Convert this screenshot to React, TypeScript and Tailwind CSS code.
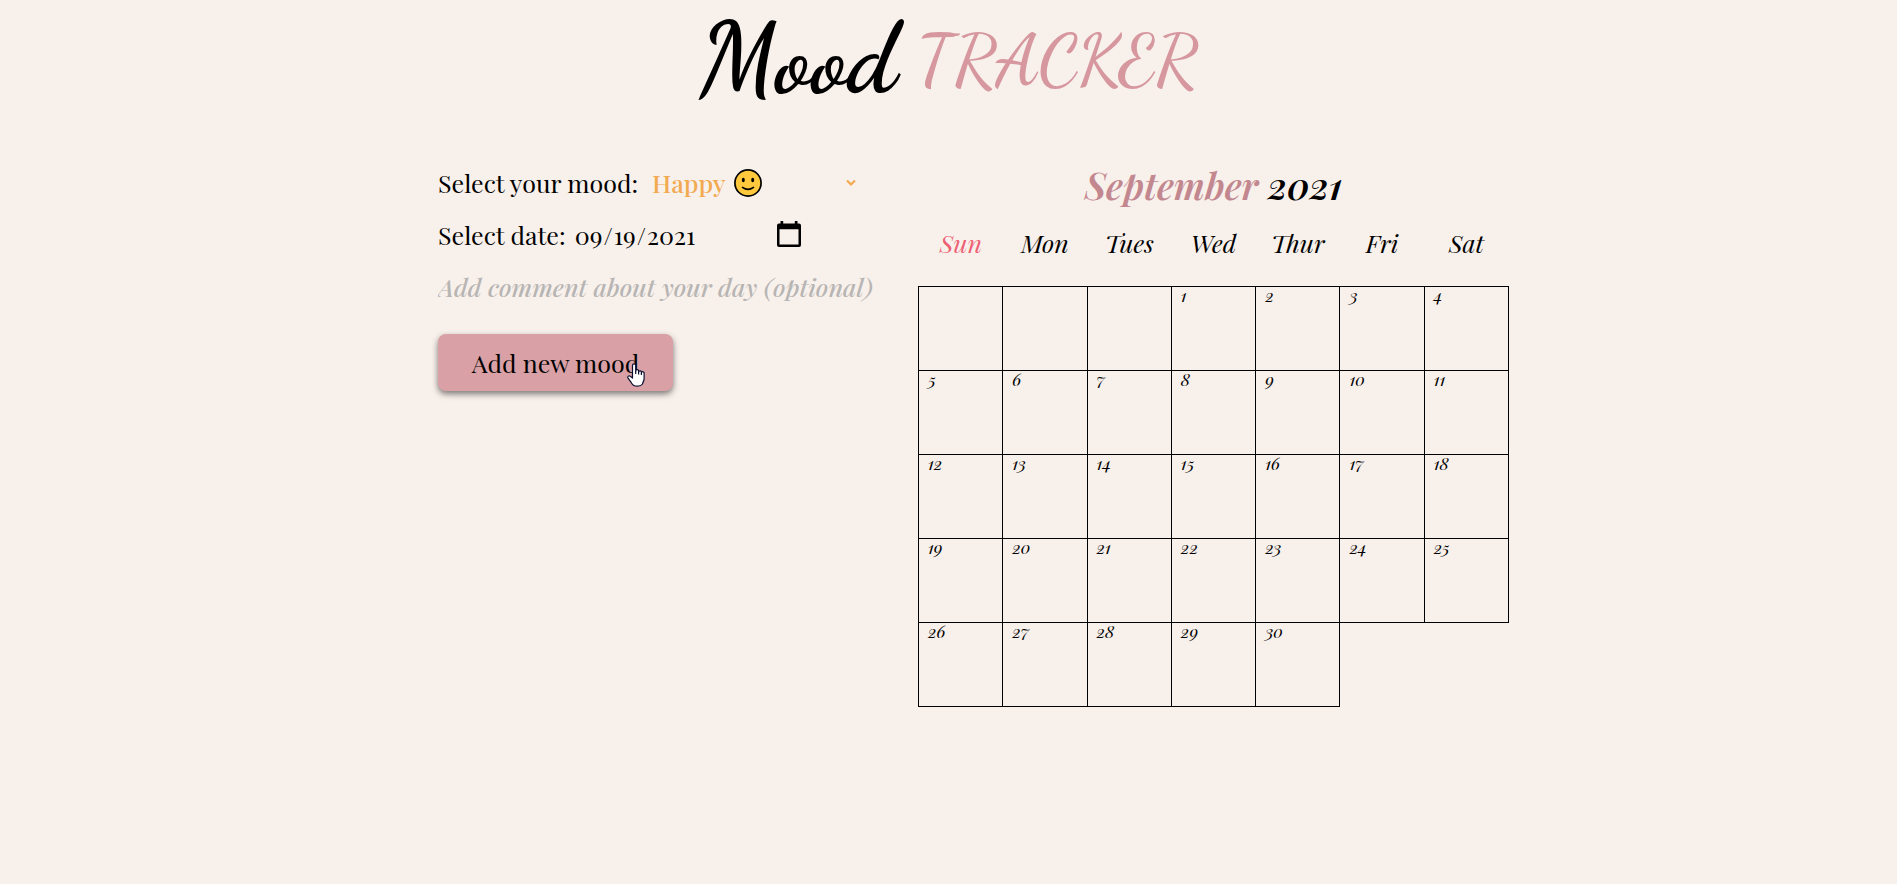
import React, { useState } from "react";

const WEEKDAYS = ["Sun", "Mon", "Tues", "Wed", "Thur", "Fri", "Sat"];
const FIRST_WEEKDAY = 3;
const DAYS_IN_MONTH = 30;

const cells: (number | null)[] = [
  ...Array.from({ length: FIRST_WEEKDAY }, () => null),
  ...Array.from({ length: DAYS_IN_MONTH }, (_, i) => i + 1),
];
const weeks: (number | null)[][] = [];
for (let i = 0; i < cells.length; i += 7) weeks.push(cells.slice(i, i + 7));

function SmileIcon() {
  return (
    <svg viewBox="0 0 28 28" className="h-7 w-7" aria-hidden="true">
      <circle cx="14" cy="14" r="13.1" fill="#ffc83d" stroke="#000" strokeWidth="1.7" />
      <ellipse cx="9.3" cy="11" rx="1.5" ry="2.2" />
      <ellipse cx="18.7" cy="11" rx="1.5" ry="2.2" />
      <path d="M8.5 18.4 Q14 22.4 19.5 18.4" fill="none" stroke="#000" strokeWidth="1.6" strokeLinecap="round" />
    </svg>
  );
}

function ChevronIcon() {
  return (
    <svg viewBox="0 0 10 8" className="h-2 w-[10px]" aria-hidden="true">
      <path d="M1 1.5 L5 5.5 L9 1.5" fill="none" stroke="#f2a950" strokeWidth="2.2" />
    </svg>
  );
}

function CalendarIcon() {
  return (
    <svg viewBox="0 0 24 26" className="h-[26px] w-6" aria-hidden="true">
      <path d="M3.5 0h2.7v2.5h11.6V0h2.7v2.5H22a2 2 0 0 1 2 2V24a2 2 0 0 1-2 2H2a2 2 0 0 1-2-2V4.5a2 2 0 0 1 2-2h1.5zM2.5 8.3V23.6h19V8.3z" fillRule="evenodd" />
    </svg>
  );
}

function HandPointer() {
  return (
    <svg viewBox="0 0 18 24" className="h-6 w-[18px]" aria-hidden="true">
      <path
        d="M5.5 14V2.5a1.6 1.6 0 0 1 3.2 0V8a1.4 1.4 0 0 1 2.9.3V9a1.4 1.4 0 0 1 2.8.4v.5a1.3 1.3 0 0 1 2.7.4V16c0 2-1.6 3.5-1.6 5-1 1.5-2.8 2.2-5 2.2-3.5 0-5-1.2-6-3.2C3.7 18 1.5 16.5.8 14.5c-.3-1.2.9-2 2-1.5 1 .5 1.8 1.3 2.7 2.2z"
        fill="#fff"
        stroke="#0b1030"
        strokeWidth="1.2"
        strokeLinejoin="round"
      />
      <path d="M8.7 8v3M11.6 9v2.5M14.4 10v2" stroke="#0b1030" strokeWidth="1.2" />
    </svg>
  );
}

function MoodForm() {
  const [mood, setMood] = useState("Happy");
  const [date, setDate] = useState("2021-09-19");
  const [comment, setComment] = useState("");

  return (
    <form className="flex w-[480px] flex-col items-start pt-4 text-[25px] leading-9" onSubmit={(e) => e.preventDefault()}>
      <div className="flex items-center">
        <label htmlFor="mood">Select your mood:</label>
        <div className="relative ml-[14px]">
          <select
            id="mood"
            value={mood}
            onChange={(e) => setMood(e.target.value)}
            className="block h-9 w-[212px] appearance-none bg-transparent leading-9 font-medium text-[#f2a950] outline-none"
          >
            <option>Happy</option>
            <option>Sad</option>
            <option>Angry</option>
            <option>Calm</option>
          </select>
          <span className="pointer-events-none absolute top-1 left-[82px]"><SmileIcon /></span>
          <span className="pointer-events-none absolute top-[14px] right-2 flex"><ChevronIcon /></span>
        </div>
      </div>

      <div className="mt-4 flex items-center">
        <label htmlFor="date">Select date:</label>
        <div className="relative ml-2">
          <input
            id="date"
            type="date"
            value={date}
            onChange={(e) => setDate(e.target.value)}
            className="block h-9 w-[231px] bg-transparent outline-none [&::-webkit-calendar-picker-indicator]:opacity-0"
          />
          <span className="pointer-events-none absolute top-1 right-1 flex"><CalendarIcon /></span>
        </div>
      </div>

      <input
        type="text"
        aria-label="Comment about your day"
        placeholder="Add comment about your day (optional)"
        value={comment}
        onChange={(e) => setComment(e.target.value)}
        className="mt-4 h-9 w-full bg-transparent font-medium italic outline-none placeholder:text-[#b7b5b3]"
      />

      <div className="relative mt-[29px]">
        <button
          type="submit"
          className="block h-[57px] w-[235px] cursor-pointer rounded-lg bg-[#d9a0a6] shadow-[0_3px_6px_rgba(0,0,0,0.5)]"
        >
          Add new mood
        </button>
        <span className="pointer-events-none absolute top-[29px] left-[189px]"><HandPointer /></span>
      </div>
    </form>
  );
}

function Calendar() {
  return (
    <section className="w-[591px] italic">
      <h2 className="text-center text-[37px] leading-[72px] font-semibold">
        <span className="text-[#c3878f]">September</span> 2021
      </h2>
      <table className="w-full table-fixed border-collapse">
        <thead>
          <tr>
            {WEEKDAYS.map((day) => (
              <th
                key={day}
                scope="col"
                className={`h-[65px] pb-5 text-[25px] leading-9 font-normal ${day === "Sun" ? "text-[#ee5f74]" : ""}`}
              >
                {day}
              </th>
            ))}
          </tr>
        </thead>
        <tbody>
          {weeks.map((week, i) => (
            <tr key={i} className="h-[84px]">
              {week.map((day, j) => (
                <td key={j} className="border border-black pl-[9px] align-top text-[17px] leading-4">
                  {day}
                </td>
              ))}
            </tr>
          ))}
        </tbody>
      </table>
    </section>
  );
}

export default function App() {
  return (
    <div className="min-h-screen bg-[#f8f0eb] font-['Playfair_Display','Liberation_Serif',serif] text-black">
      <h1 className="flex items-center justify-center gap-5 text-[98px] leading-[120px] font-['Dancing_Script','Playfair_Display','Liberation_Serif',cursive]">
        <span className="font-bold">Mood</span>
        <span className="text-[72px] font-medium text-[#d6979f]">TRACKER</span>
      </h1>
      <main className="flex justify-center pt-[29px] pl-[50px]">
        <MoodForm />
        <Calendar />
      </main>
    </div>
  );
}
